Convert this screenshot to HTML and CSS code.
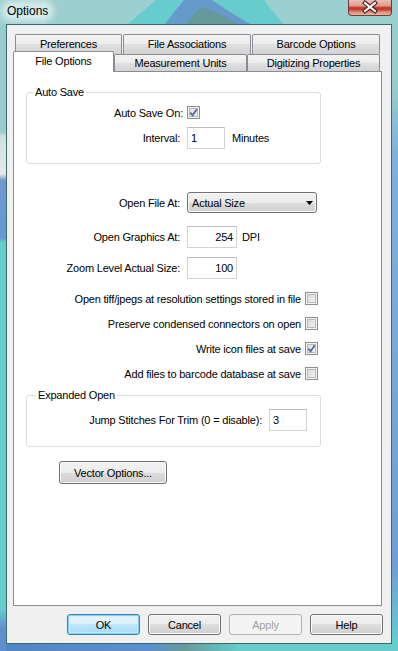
FILE: index.html
```html
<!DOCTYPE html>
<html>
<head>
<meta charset="utf-8">
<title>Options</title>
<link rel="stylesheet" href="styles.css">
</head>
<body>
<div class="window">
  <div class="titlebar">
    <svg class="title-art" viewBox="0 0 398 24" width="398" height="24" aria-hidden="true">
      <polygon points="128,24 140,14 150,5 156,0 264,0 270,8 277,16 283,24" fill="#66cccc"/>
      <polygon points="165,24 175,11 184,0 212,0 230,12 250,24" fill="#6699cc"/>
      <polygon points="186,24 194,14 202,7 220,14 238,24" fill="#669999"/>
    </svg>
    <span class="title">Options</span>
    <span class="close">
      <svg viewBox="0 0 44 16" width="44" height="16" aria-hidden="true">
        <path d="M17 3 L27 11 M27 3 L17 11" stroke="#4a2020" stroke-width="4.2" stroke-linecap="square" fill="none"/>
        <path d="M17 3 L27 11 M27 3 L17 11" stroke="#ffffff" stroke-width="2" stroke-linecap="square" fill="none"/>
      </svg>
    </span>
  </div>
  <div class="frame">
    <div class="client">
      <div class="tabctl">
        <div class="tabrow back">
          <div class="tab t-pref">Preferences</div>
          <div class="tab t-fa">File Associations</div>
          <div class="tab t-bo">Barcode Options</div>
        </div>
        <div class="tabrow front">
          <div class="tab sel t-fo">File Options</div>
          <div class="tab t-mu">Measurement Units</div>
          <div class="tab t-dp">Digitizing Properties</div>
        </div>
        <div class="panel">
          <div class="group g1">
            <div class="legend">Auto Save</div>
            <div class="row r-chk">
              <span class="lbl l-chk">Auto Save On:</span>
              <span class="cb on"><svg viewBox="0 0 11 11" width="11" height="11"><path d="M2.3 5.6 L4.6 8.2 L8.8 2.2" fill="none" stroke="#55689a" stroke-width="1.8"/></svg></span>
            </div>
            <div class="row r-int">
              <span class="lbl l-int">Interval:</span>
              <span class="input w38">1</span>
              <span class="unit">Minutes</span>
            </div>
          </div>

          <div class="row r-open">
            <span class="lbl l-main">Open File At:</span>
            <span class="select"><span>Actual Size</span><svg class="arrow" viewBox="0 0 7 4" width="7" height="4"><polygon points="0,0 7,0 3.5,4" fill="#000"/></svg></span>
          </div>
          <div class="row r-gfx">
            <span class="lbl l-main">Open Graphics At:</span>
            <span class="input w50 num">254</span>
            <span class="unit u-dpi">DPI</span>
          </div>
          <div class="row r-zoom">
            <span class="lbl l-main">Zoom Level Actual Size:</span>
            <span class="input w50 num">100</span>
          </div>

          <div class="row r-cb first">
            <span>Open tiff/jpegs at resolution settings stored in file</span>
            <span class="cb"></span>
          </div>
          <div class="row r-cb">
            <span>Preserve condensed connectors on open</span>
            <span class="cb"></span>
          </div>
          <div class="row r-cb">
            <span>Write icon files at save</span>
            <span class="cb on"><svg viewBox="0 0 11 11" width="11" height="11"><path d="M2.3 5.6 L4.6 8.2 L8.8 2.2" fill="none" stroke="#55689a" stroke-width="1.8"/></svg></span>
          </div>
          <div class="row r-cb">
            <span>Add files to barcode database at save</span>
            <span class="cb"></span>
          </div>

          <div class="group g2">
            <div class="legend">Expanded Open</div>
            <div class="row r-jump">
              <span class="lbl l-jump">Jump Stitches For Trim (0 = disable):</span>
              <span class="input w38">3</span>
            </div>
          </div>

          <div class="btn vector">Vector Options...</div>
        </div>
      </div>
      <div class="buttons">
        <div class="btn def">OK</div>
        <div class="btn">Cancel</div>
        <div class="btn dis">Apply</div>
        <div class="btn">Help</div>
      </div>
    </div>
  </div>
</div>
</body>
</html>
```
FILE: styles.css
```css
* { box-sizing: border-box; }
html, body { margin: 0; padding: 0; }
body {
  width: 398px;
  height: 651px;
  overflow: hidden;
  font-family: "Liberation Sans", Arial, sans-serif;
  font-size: 11px;
  letter-spacing: -0.2px;
  color: #000;
  background: #99cccc;
}
.window { height: 651px; display: flex; flex-direction: column; }

/* title bar */
.titlebar {
  position: relative;
  height: 24px;
  flex: none;
  display: flex;
  justify-content: space-between;
  align-items: flex-start;
  background: #9ccfcf;
  overflow: hidden;
}
.title-art { position: absolute; left: 0; top: 0; }
.title {
  position: relative;
  margin: 4px 0 0 5px;
  padding: 0 2px;
  font-size: 12px;
  letter-spacing: 0;
  line-height: 14px;
  background: rgba(255,255,255,0.55);
  border-radius: 8px;
  box-shadow: 0 0 6px 4px rgba(255,255,255,0.55);
}
.close {
  position: relative;
  width: 44px;
  height: 16px;
  margin-right: 6px;
  border: 1px solid #6e3b36;
  border-top: none;
  border-radius: 0 0 4px 4px;
  background: linear-gradient(#e9bfb4 0, #dc9c8d 40%, #c8402f 48%, #c0392b 62%, #de8f7d 80%, #eab7a6 100%);
  display: flex;
}
.close svg { position: absolute; left: -1px; top: 0; }

/* frame */
.frame {
  flex: 1;
  display: flex;
  padding: 0 6px 7px 6px;
  background:
    linear-gradient(#99cccc 0, #99cccc 108px, #cfe0e0 112px, #e6e9e9 150px, #6f99cc 156px, #6699cc 214px, #66cccc 218px, #66cccc 585px, #5f8fcc 605px) left top / 6px 100% no-repeat,
    linear-gradient(#99cccc 0, #99cccc 60px, #80b2d8 130px, #6f9fd6 540px, #66cccc 620px) right top / 6px 100% no-repeat,
    linear-gradient(to right, #4f86c6 0, #5b90cc 150px, #6a9a9a 185px, #66cccc 240px, #66cccc 100%) left bottom / 100% 7px no-repeat,
    #99cccc;
}
.client {
  flex: 1;
  border: 1px solid #3a6b6b;
  background: #f0f0f0;
  display: flex;
  flex-direction: column;
  padding: 9px 8px 8px 6px;
}

/* tabs */
.tabctl { width: 369px; height: 572px; display: flex; flex-direction: column; flex: none; }
.tabrow { display: flex; height: 20px; flex: none; }
.tabrow.back { margin-left: 2px; gap: 1px; }
.tabrow.front { margin-top: -3px; position: relative; z-index: 2; align-items: flex-start; }
.tab {
  height: 20px;
  border: 1px solid #898c95;
  border-bottom: none;
  border-radius: 2px 2px 0 0;
  background: linear-gradient(#f3f3f3 0, #ececec 50%, #e0e0e0 50%, #d3d3d3 100%);
  text-align: center;
  line-height: 18px;
  white-space: nowrap;
  flex: none;
}
.front .tab { margin-top: 3px; height: 17px; line-height: 16px; }
.front .tab.sel { margin-top: 0; height: 21px; line-height: 18px; background: #fff; }
.t-pref { width: 107px; }
.t-fa { width: 128px; }
.t-bo { width: 128px; }
.t-fo { width: 101px; }
.t-mu { width: 133px; }
.t-dp { width: 133px; }

.panel {
  position: relative;
  z-index: 1;
  height: 535px;
  border: 1px solid #898c95;
  background: #fff;
  padding: 20px 0 0 12px;
}

/* groups */
.group { width: 295px; border: 1px solid #d5dfe5; border-radius: 3px; }
.legend {
  display: table;
  background: #fff;
  padding: 0 2px;
  margin-top: -7px;
  line-height: 13px;
}
.g1 { height: 72px; }
.g1 .legend { margin-left: 6px; }
.g2 { height: 52px; margin-top: 15px; }
.g2 .legend { margin-left: 9px; }

.row { display: flex; align-items: center; }
.lbl { text-align: right; flex: none; white-space: nowrap; }
.r-chk { margin-top: 7px; height: 13px; }
.l-chk { width: 156px; margin-right: 4px; }
.r-int { margin-top: 8px; height: 22px; }
.l-int { width: 153px; margin-right: 7px; }
.unit { margin-left: 7px; }
.u-dpi { margin-left: 5px; }

.r-open { margin-top: 28px; height: 21px; }
.r-gfx { margin-top: 13px; height: 22px; }
.r-zoom { margin-top: 9px; height: 22px; }
.l-main { width: 154px; margin-right: 7px; }

.r-cb { width: 292px; justify-content: flex-end; height: 13px; margin-top: 12px; gap: 4px; white-space: nowrap; }
.r-cb.first { margin-top: 13px; }

.r-jump { margin-top: 7px; height: 22px; }
.l-jump { width: 235px; margin-right: 7px; }

/* controls */
.input {
  display: block;
  height: 22px;
  border: 1px solid #d2d2d2;
  border-top-color: #bdbdbd;
  background: #fff;
  padding: 0 3px;
  line-height: 20px;
  flex: none;
}
.w38 { width: 38px; }
.w50 { width: 50px; }
.num { text-align: right; }

.cb {
  display: flex;
  align-items: center;
  justify-content: center;
  width: 13px;
  height: 13px;
  flex: none;
  border: 1px solid #8e8f8f;
  background: linear-gradient(135deg, #d4d4d4 0, #f7f7f7 100%);
  box-shadow: inset 0 0 0 1px #f4f4f4, inset 0 0 0 2px #b9b9b9;
}
.cb.on { background: linear-gradient(135deg, #e0e0e0 0, #f4f4f4 100%); }

.select {
  display: flex;
  align-items: center;
  justify-content: space-between;
  width: 130px;
  height: 21px;
  border: 1px solid #707070;
  border-radius: 3px;
  background: linear-gradient(#f2f2f2 0, #ebebeb 50%, #dddddd 50%, #cfcfcf 100%);
  box-shadow: inset 0 0 0 1px #fafafa;
  padding: 0 3px 0 4px;
  flex: none;
}
.arrow { display: block; }

.btn {
  display: flex;
  align-items: center;
  justify-content: center;
  height: 21px;
  width: 73px;
  border: 1px solid #707070;
  border-radius: 3px;
  background: linear-gradient(#f2f2f2 0, #ebebeb 50%, #dddddd 50%, #cfcfcf 100%);
  box-shadow: inset 0 0 0 1px #fbfbfb;
  flex: none;
}
.btn.vector { width: 108px; height: 23px; margin: 14px 0 0 33px; }
.btn.def {
  border-color: #3c7fb1;
  background: linear-gradient(#eaf6fd 0, #d9f0fc 50%, #bee6fd 50%, #a7d9f5 100%);
  box-shadow: inset 0 0 0 1px #7fd5f7, inset 0 0 0 2px rgba(200,240,255,0.7);
}
.btn.dis {
  border-color: #adb2b5;
  background: #f4f4f4;
  box-shadow: none;
  color: #a0a0a0;
}
.buttons {
  display: flex;
  justify-content: flex-end;
  gap: 8px;
  margin-top: 8px;
  height: 21px;
}
```
